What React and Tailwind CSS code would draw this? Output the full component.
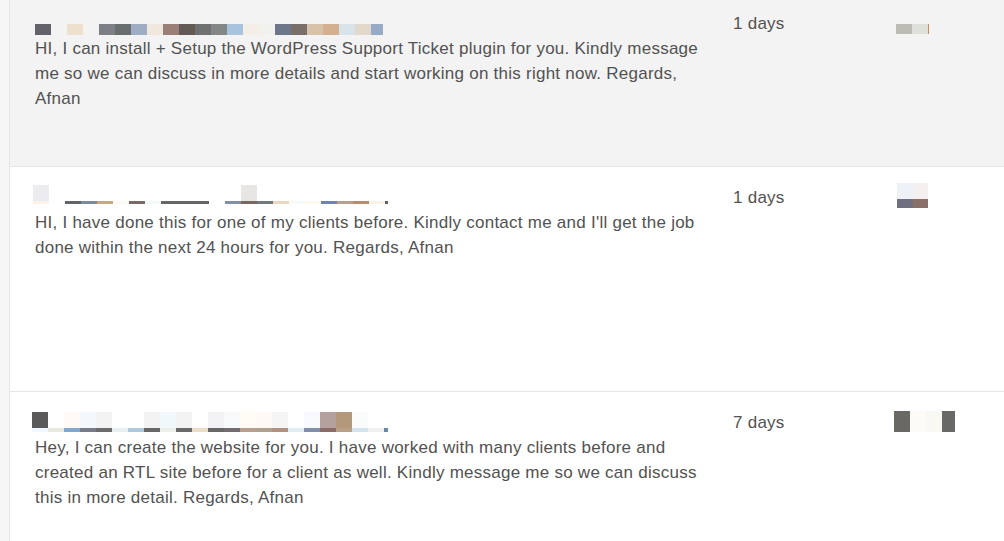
import React from 'react';

// blurred names / avatars are pixel mosaics: each cell = [width, top colour, bottom colour]
const nameOne = [
  ['w-4', 'bg-[#63626b]'], ['w-4', 'bg-transparent'], ['w-4', 'bg-[#ede0cc]'], ['w-4', 'bg-transparent'],
  ['w-4', 'bg-[#7c8085]'], ['w-4', 'bg-[#6a6d6e]'], ['w-4', 'bg-[#9eadc3]'], ['w-4', 'bg-[#f0e8de]'],
  ['w-4', 'bg-[#9b7e76]'], ['w-4', 'bg-[#635a55]'], ['w-4', 'bg-[#6e7072]'], ['w-4', 'bg-[#838786]'],
  ['w-4', 'bg-[#a8c4dc]'], ['w-4', 'bg-[#f3efe6]'], ['w-4', 'bg-[#f1f2ee]'], ['w-4', 'bg-[#6d778a]'],
  ['w-4', 'bg-[#7a6e68]'], ['w-4', 'bg-[#d6c3aa]'], ['w-4', 'bg-[#d3b08f]'], ['w-4', 'bg-[#d8e4ea]'],
  ['w-4', 'bg-[#e2d9cc]'], ['w-[12px]', 'bg-[#97abc6]'],
];

const nameTwo = [
  ['w-4', 'bg-[#ebebf0]', 'bg-[#fdf3e8]'], ['w-4', 'bg-transparent', 'bg-transparent'],
  ['w-4', 'bg-transparent', 'bg-[#62656a]'], ['w-4', 'bg-transparent', 'bg-[#7a8aa0]'],
  ['w-4', 'bg-transparent', 'bg-[#c8a880]'], ['w-4', 'bg-transparent', 'bg-[#fbfbf3]'],
  ['w-4', 'bg-transparent', 'bg-[#786a66]'], ['w-4', 'bg-transparent', 'bg-[#f3fbf8]'],
  ['w-4', 'bg-transparent', 'bg-[#666666]'], ['w-4', 'bg-transparent', 'bg-[#666666]'],
  ['w-4', 'bg-transparent', 'bg-[#666666]'], ['w-4', 'bg-transparent', 'bg-transparent'],
  ['w-4', 'bg-transparent', 'bg-[#8090a8]'], ['w-4', 'bg-[#e8e6e4]', 'bg-[#7a6860]'],
  ['w-4', 'bg-transparent', 'bg-[#707880]'], ['w-4', 'bg-transparent', 'bg-[#ecd8c0]'],
  ['w-4', 'bg-transparent', 'bg-[#f5fbf8]'], ['w-4', 'bg-transparent', 'bg-[#fff8ee]'],
  ['w-4', 'bg-transparent', 'bg-[#6e84b0]'], ['w-4', 'bg-transparent', 'bg-[#b8a08e]'],
  ['w-4', 'bg-transparent', 'bg-[#b88c6c]'], ['w-4', 'bg-transparent', 'bg-[#fbf3e8]'],
  ['w-[3px]', 'bg-transparent', 'bg-[#606060]'],
];

const nameThree = [
  ['w-4', 'bg-[#5a5a5a]', 'bg-[#f0f8ff]'], ['w-4', 'bg-transparent', 'bg-[#e8e8dc]'],
  ['w-4', 'bg-[#fffaf5]', 'bg-[#80a8d0]'], ['w-4', 'bg-[#f5f8fa]', 'bg-[#787c88]'],
  ['w-4', 'bg-[#f3f3f3]', 'bg-[#6a6c6e]'], ['w-4', 'bg-transparent', 'bg-[#e8f0f4]'],
  ['w-4', 'bg-transparent', 'bg-[#b0c8dc]'], ['w-4', 'bg-[#f3f3f3]', 'bg-[#686868]'],
  ['w-4', 'bg-[#f0f8fc]', 'bg-[#ecefe6]'], ['w-4', 'bg-[#f3f3f3]', 'bg-[#6a6a6a]'],
  ['w-4', 'bg-transparent', 'bg-[#ecdcc8]'], ['w-4', 'bg-[#f3f3f6]', 'bg-[#6a6866]'],
  ['w-4', 'bg-[#f8f9fb]', 'bg-[#746a72]'], ['w-4', 'bg-[#fffbf5]', 'bg-[#b8a090]'],
  ['w-4', 'bg-[#fdfaf5]', 'bg-[#b0a090]'], ['w-4', 'bg-[#f5f5f5]', 'bg-[#b09080]'],
  ['w-4', 'bg-transparent', 'bg-[#e0ecf4]'], ['w-4', 'bg-[#f8f9fc]', 'bg-[#8090a8]'],
  ['w-4', 'bg-[#b4a09c]', 'bg-[#8c6c68]'], ['w-4', 'bg-[#b4987c]', 'bg-[#b8a088]'],
  ['w-4', 'bg-[#fafcfc]', 'bg-[#d4e4ee]'], ['w-4', 'bg-transparent', 'bg-[#f0f0f0]'],
  ['w-[4px]', 'bg-transparent', 'bg-[#6a88a8]'],
];

const userOne = [['w-4', 'bg-[#bcbcb4]'], ['w-4', 'bg-[#e0e0da]'], ['w-px', 'bg-[#c09060]']];
const userTwo = [['w-4', 'bg-[#eef2f6]', 'bg-[#6e7080]'], ['w-[15px]', 'bg-[#f5f0f0]', 'bg-[#8a7068]']];
const userThree = [['w-4', 'bg-[#6a6862]'], ['w-4', 'bg-[#fdfbf8]'], ['w-4', 'bg-[#faf8f2]'], ['w-[13px]', 'bg-[#686866]']];

const Mosaic = ({ cells, className, topH, bottomH }) => (
  <div className={`flex ${className}`}>
    {cells.map((c, i) => (
      <div key={i} className={`flex flex-col ${c[0]}`}>
        <div className={`${topH} ${c[1]}`} />
        {bottomH && <div className={`${bottomH} ${c[2]}`} />}
      </div>
    ))}
  </div>
);

const rows = [
  {
    rowClass: 'h-[174px] bg-[#f3f3f3]',
    name: <Mosaic cells={nameOne} className="pt-[13px]" topH="h-[11px]" />,
    text: 'HI, I can install + Setup the WordPress Support Ticket plugin for you. Kindly message me so we can discuss in more details and start working on this right now. Regards, Afnan',
    days: '1 days',
    user: <Mosaic cells={userOne} className="ml-px pt-[13px]" topH="h-[10px]" />,
  },
  {
    rowClass: 'h-[225px] bg-white',
    name: <Mosaic cells={nameTwo} className="-ml-[2px]" topH="h-4" bottomH="h-[3px]" />,
    text: "HI, I have done this for one of my clients before. Kindly contact me and I'll get the job done within the next 24 hours for you. Regards, Afnan",
    days: '1 days',
    user: <Mosaic cells={userTwo} className="ml-[2px] -mt-[2px]" topH="h-4" bottomH="h-[9px]" />,
  },
  {
    rowClass: 'h-[200px] bg-white',
    name: <Mosaic cells={nameThree} className="-ml-[3px] pt-[2px]" topH="h-4" bottomH="h-[4px]" />,
    text: 'Hey, I can create the website for you. I have worked with many clients before and created an RTL site before for a client as well. Kindly message me so we can discuss this in more detail. Regards, Afnan',
    days: '7 days',
    user: <Mosaic cells={userThree} className="-ml-px pt-px" topH="h-[21px]" />,
  },
];

const App = () => {
  return (
    <div className="h-[541px] overflow-hidden bg-[#f6f6f6] pl-[9px] font-['Liberation_Sans',Arial,sans-serif] text-[17px] leading-[25px] tracking-[0.25px] text-[#525252]">
      <div className="-mt-[7px] border-l border-[#e5e5e5] bg-white">
        {rows.map((row, i) => (
          <div key={i} className={`flex border-b border-[#e6e6e6] ${row.rowClass}`}>
            {/* Proposal */}
            <div className="w-[698px] shrink-0 pl-[25px] pr-[4px] pt-[18px]">
              <div className="h-[25px]">{row.name}</div>
              <p>{row.text}</p>
            </div>
            {/* Delivery */}
            <div className="w-[162px] shrink-0 pl-[25px] pt-[18px]">
              <p>{row.days}</p>
            </div>
            {/* Freelancer */}
            <div className="flex-1 pl-[25px] pt-[18px]">
              <div className="h-[25px]">{row.user}</div>
            </div>
          </div>
        ))}
      </div>
    </div>
  );
};

export default App;
